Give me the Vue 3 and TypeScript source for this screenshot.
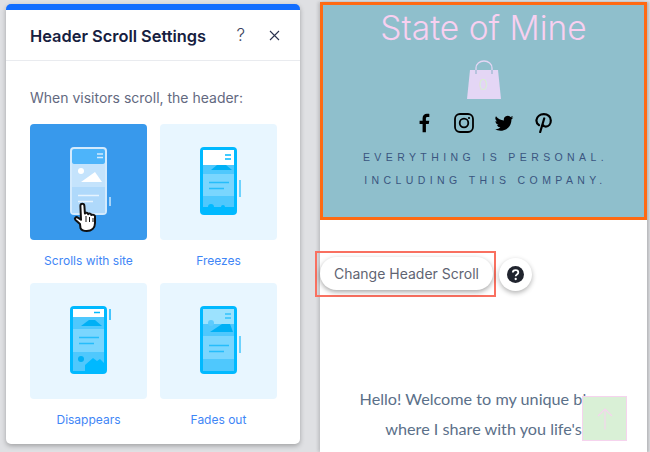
<script setup lang="ts">
type Mode = 'scrolls' | 'freezes' | 'disappears' | 'fades'

const options: { id: Mode; label: string }[] = [
  { id: 'scrolls', label: 'Scrolls with site' },
  { id: 'freezes', label: 'Freezes' },
  { id: 'disappears', label: 'Disappears' },
  { id: 'fades', label: 'Fades out' },
]
</script>

<template>
  <div class="page">
    <section class="panel">
      <header class="panel-head">
        <h1>Header Scroll Settings</h1>
        <span class="help">?</span>
        <svg class="close" width="11" height="11" viewBox="0 0 11 11">
          <path d="M1 1l9 9M10 1l-9 9" fill="none" stroke="#2b3350" stroke-width="1.1" />
        </svg>
      </header>
      <div class="panel-body">
        <p class="lead">When visitors scroll, the header:</p>
        <div class="grid">
          <div v-for="o in options" :key="o.id" class="option">
            <div class="thumb" :class="{ selected: o.id === 'scrolls' }">
              <!-- 手机示意图 -->
              <svg v-if="o.id === 'scrolls'" class="phone" width="50" height="92" viewBox="0 0 50 92">
                <rect x="4" y="0" width="37" height="68" rx="4" fill="#d3eafd" />
                <rect x="6" y="2" width="33" height="15" rx="2" fill="#4db4fa" />
                <path d="M31 7h6M31 10.500h6" stroke="#d3eafd" stroke-width="1.300" />
                <rect x="6" y="17" width="33" height="23" fill="#c4e3fc" />
                <circle cx="15" cy="24" r="3" fill="#fff" />
                <path d="M15 35l14-10 7 10z" fill="#fff" />
                <rect x="6" y="40" width="33" height="26" fill="#afd9fb" />
                <path d="M12 48.500h21M12 54.500h15" stroke="#e6f4fe" stroke-width="1.300" />
                <rect x="43" y="50" width="2" height="9" fill="#a9d4f8" />
                <g transform="translate(-1 3)">
                  <path
                    d="M15 74l-4.500-4c-1.600-1.500 .5-3.800 2.300-2.400l3.200 2.100-.6-13.700c0-2.900 3.800-2.900 4 0l.5 7.500c1-1.200 3-.9 3.300.7 1-1.100 3-.7 3.200.8 1.200-.8 3.600 0 3.600 1.600v6.400c0 5.200-3.700 8-8.200 8-3.600 0-5.600-1.500-6.300-2.800z"
                    fill="#fff" stroke="#111" stroke-width="2" stroke-linejoin="round"
                  />
                  <path d="M21 66v6M24.500 67v5M28 68v4" stroke="#111" stroke-width="1" />
                </g>
              </svg>
              <svg v-else-if="o.id === 'freezes'" class="phone" width="50" height="92" viewBox="0 0 50 92">
                <rect x="4" y="0" width="37" height="68" rx="4" fill="#00b9ff" />
                <rect x="7" y="18" width="31" height="47" fill="#4fc8fd" />
                <rect x="7" y="27" width="31" height="22" fill="#7ad6fe" />
                <rect x="7" y="3" width="31" height="15" fill="#fff" />
                <path d="M29 8h6M29 12h6" stroke="#00b9ff" stroke-width="1.500" />
                <path d="M15 23l6-5h9l6 5z" fill="#00b0f5" />
                <path d="M13 35.500h20M13 41.500h15" stroke="#25bdfb" stroke-width="1.300" />
                <path d="M7 65v-5l5 0a3 3 0 0 1 6 0h7a2 2 0 0 1 4 0h9v5z" fill="#00b9ff" />
                <rect x="43" y="33" width="2" height="17" fill="#6ed2fd" />
              </svg>
              <svg v-else-if="o.id === 'disappears'" class="phone" width="50" height="92" viewBox="0 0 50 92">
                <rect x="4" y="0" width="37" height="68" rx="4" fill="#00b9ff" />
                <rect x="7" y="3" width="31" height="62" fill="#4fc8fd" />
                <rect x="7" y="23" width="31" height="23" fill="#7ad6fe" />
                <rect x="7" y="3" width="31" height="8" fill="#fff" />
                <path d="M28 6.500h6" stroke="#00b9ff" stroke-width="1.500" />
                <path d="M15 20l8-6h6l7 6z" fill="#00b0f5" />
                <path d="M13 31.500h20M13 37.500h15" stroke="#25bdfb" stroke-width="1.300" />
                <circle cx="15" cy="53" r="3" fill="#00b0f5" />
                <path d="M19 59l8-7 4 3 3-2 4 4v8H19z" fill="#00b9ff" />
                <rect x="43" y="3" width="2" height="11" fill="#45c5fd" />
              </svg>
              <svg v-else class="phone" width="50" height="92" viewBox="0 0 50 92">
                <rect x="4" y="0" width="37" height="68" rx="4" fill="#00b9ff" />
                <rect x="7" y="3" width="31" height="62" fill="#4fc8fd" />
                <rect x="7" y="3" width="31" height="15" fill="#9ce2fe" />
                <rect x="7" y="30" width="31" height="23" fill="#7ad6fe" />
                <path d="M29 8h6M29 12h6" stroke="#33c2fc" stroke-width="1.500" />
                <circle cx="15" cy="17" r="3" fill="#5ccbfd" />
                <path d="M14 26l12-8 8 0 3 8z" fill="#00b0f5" />
                <path d="M13 39.500h20M13 45.500h15" stroke="#25bdfb" stroke-width="1.300" />
                <rect x="43" y="30" width="2" height="17" fill="#6ed2fd" />
              </svg>
            </div>
            <span class="label">{{ o.label }}</span>
          </div>
        </div>
      </div>
    </section>

    <main class="site">
      <header class="site-head">
        <div class="brand">State of Mine</div>
        <div class="bag">
          <svg width="34" height="40" viewBox="0 0 34 40">
            <path d="M9 11V8a8 7 0 0 1 16 0v3" fill="none" stroke="#e4d6f5" stroke-width="1.300" />
            <path d="M3 10h28l3 29H0z" fill="#e4d6f5" />
            <path d="M9 10v4M25 10v4" stroke="#9fb9d2" stroke-width="1.300" />
          </svg>
          <span class="bag-count">0</span>
        </div>
        <div class="social">
          <svg width="20" height="20" viewBox="0 0 24 24">
            <path d="M14.300 23v-9.800h3.400l.6-4h-4V6.700c0-1.200.4-2 2-2h2.100V1.200C18 1.100 16.800 1 15.500 1c-3 0-5.200 1.900-5.200 5.200v3H6.700v4h3.600V23z" />
          </svg>
          <svg width="20" height="20" viewBox="0 0 20 20">
            <rect x="1" y="1" width="18" height="18" rx="5" fill="none" stroke="#000" stroke-width="1.800" />
            <circle cx="10" cy="10" r="4.300" fill="none" stroke="#000" stroke-width="1.800" />
            <circle cx="15" cy="5" r="1.100" />
          </svg>
          <svg width="20" height="20" viewBox="0 0 24 24">
            <path d="M23.200 5.400a9.100 9.100 0 0 1-2.600.7 4.600 4.600 0 0 0 2-2.500c-.9.500-1.900.9-2.900 1.100a4.600 4.600 0 0 0-7.800 4.200A13 13 0 0 1 2.400 4a4.600 4.600 0 0 0 1.400 6.100 4.500 4.500 0 0 1-2-.6v.1a4.600 4.600 0 0 0 3.700 4.500 4.600 4.600 0 0 1-2.100.1 4.600 4.600 0 0 0 4.300 3.200A9.200 9.200 0 0 1 .9 19.300a13 13 0 0 0 7 2.100c8.400 0 13-7 13-13v-.6c.9-.7 1.700-1.500 2.300-2.400z" />
          </svg>
          <svg width="20" height="20" viewBox="0 0 20 20">
            <path
              d="M5 12.200C3 10.800 2.200 9 2.500 6.900 3 3.500 6 1.200 9.800 1.200c4 0 7 2.600 7 6.200 0 3.700-2.200 6.200-5 6.200-1.500 0-2.600-.8-3-1.900M10.200 5.500 6.200 19"
              fill="none" stroke="#000" stroke-width="2.200" stroke-linecap="round"
            />
          </svg>
        </div>
        <p class="tagline">EVERYTHING IS PERSONAL.</p>
        <p class="tagline">INCLUDING THIS COMPANY.</p>
      </header>

      <div class="actions">
        <div class="highlight">
          <button class="scroll-btn">Change Header Scroll</button>
        </div>
        <span class="round-help">
          <svg width="17" height="17" viewBox="0 0 17 17">
            <circle cx="8.500" cy="8.500" r="8.500" fill="#20242e" />
            <path d="M5.800 6.600c0-1.500 1.200-2.500 2.800-2.500s2.700.9 2.700 2.300c0 2-2.600 2-2.600 3.800" fill="none" stroke="#fff" stroke-width="1.800" />
            <circle cx="8.700" cy="13" r="1.150" fill="#fff" />
          </svg>
        </span>
      </div>

      <div class="welcome">
        <p>Hello! Welcome to my unique blog,</p>
        <p>where I share with you life's</p>
        <p>ups and downs and life</p>
      </div>

      <!-- 回到顶部按钮，浮在内容上 -->
      <div class="to-top">
        <svg width="16" height="22" viewBox="0 0 16 22">
          <path d="M8 21.500V1M1 8l7-7 7 7" fill="none" stroke="#f6d3ee" stroke-width="1.100" />
        </svg>
      </div>
    </main>
  </div>
</template>

<style>
html,
body {
  margin: 0;
  overflow: hidden;
  background: #dfe0e3;
}
</style>

<style scoped>
.page {
  width: 650px;
  height: 452px;
  display: flex;
  align-items: flex-start;
  overflow: hidden;
  font-family: Inter, "Liberation Sans", sans-serif;
  background: #dfe0e3;
}

.panel {
  flex: none;
  width: 294px;
  height: 440px;
  margin: 4px 0 0 6px;
  background: #fff;
  border-top: 6px solid #116dff;
  border-radius: 5px;
  box-sizing: border-box;
  box-shadow: 0 2px 5px rgba(0, 0, 0, 0.28);
}
.panel-head {
  height: 50px;
  display: flex;
  align-items: center;
  padding: 0 20px 0 24px;
  border-bottom: 1px solid #e9ebef;
}
.panel-head h1 {
  flex: 1;
  margin: 0;
  padding-top: 1px;
  font-size: 16.4px;
  font-weight: 600;
  color: #162040;
}
.help {
  font-size: 17px;
  font-weight: 300;
  color: #3b4360;
  margin-right: 24px;
}
.panel-body {
  padding: 0 23px 0 24px;
}
.lead {
  margin: 27px 0 16px;
  font-size: 14px;
  line-height: 20px;
  color: #63697f;
}
.grid {
  display: grid;
  grid-template-columns: 117px 117px;
  column-gap: 13px;
  row-gap: 14px;
}
.option {
  display: flex;
  flex-direction: column;
  align-items: center;
}
.thumb {
  width: 117px;
  height: 116px;
  background: #e8f6ff;
  border-radius: 4px;
  display: flex;
  justify-content: center;
  padding-top: 23px;
  box-sizing: border-box;
  overflow: hidden;
}
.thumb.selected {
  background: #3899ec;
}
.phone {
  display: block;
  margin-left: 5px;
}
.label {
  margin-top: 13px;
  font-size: 12px;
  line-height: 16px;
  color: #3f86f6;
}

.site {
  position: relative;
  flex: none;
  width: 327px;
  height: 450px;
  margin: 2px 0 0 20px;
  background: #fff;
  box-shadow: -2px 0 3px rgba(0, 0, 0, 0.14), 2px 0 2px rgba(0, 0, 0, 0.16);
}
.site-head {
  height: 218px;
  box-sizing: border-box;
  border: 3px solid #ff6a13;
  background: #8fbfcc;
  text-align: center;
}
.brand {
  margin-top: 3px;
  font-family: Inter, sans-serif;
  font-weight: 300;
  font-size: 33.5px;
  line-height: 40px;
  color: #f8d0f0;
}
.bag {
  position: relative;
  width: 34px;
  height: 40px;
  margin: 12px auto 0;
}
.bag svg {
  display: block;
}
.bag-count {
  position: absolute;
  left: 0;
  right: 0;
  top: 16px;
  font-weight: 300;
  font-size: 15px;
  line-height: 18px;
  color: #d8eed2;
}
.social {
  display: flex;
  justify-content: center;
  gap: 20px;
  margin-top: 13px;
}
.tagline {
  margin: 14px 0 0;
  padding-left: 4px;
  font-family: "Liberation Sans", sans-serif;
  font-size: 10.5px;
  line-height: 9px;
  letter-spacing: 4.4px;
  color: #3a5580;
}
.social + .tagline {
  margin-top: 20px;
}

.actions {
  display: flex;
  align-items: center;
  gap: 3px;
  margin: 31px 0 0 -5px;
}
.highlight {
  padding: 4px 1px 5px 3px;
  border: 2px solid #f97060;
}
.scroll-btn {
  display: block;
  width: 173px;
  height: 33px;
  padding: 0;
  border: none;
  border-radius: 17px;
  background: #fff;
  box-shadow: 0 2px 5px rgba(0, 0, 0, 0.35);
  font-family: inherit;
  font-size: 14px;
  color: #5f6472;
}
.round-help {
  width: 33px;
  height: 33px;
  border-radius: 50%;
  background: #fff;
  box-shadow: 0 2px 5px rgba(0, 0, 0, 0.3);
  display: flex;
  align-items: center;
  justify-content: center;
}

.welcome {
  margin-top: 87px;
  text-align: center;
  font-family: Lato, sans-serif;
  font-size: 16.2px;
  line-height: 30px;
  color: #5b7089;
}
.welcome p {
  margin: 0;
  white-space: nowrap;
}
.to-top {
  position: absolute;
  left: 262px;
  top: 394px;
  width: 45px;
  height: 45px;
  box-sizing: border-box;
  border: 1px solid #f6d3ee;
  background: #d9f0d6;
  display: flex;
  align-items: center;
  justify-content: center;
}
</style>
